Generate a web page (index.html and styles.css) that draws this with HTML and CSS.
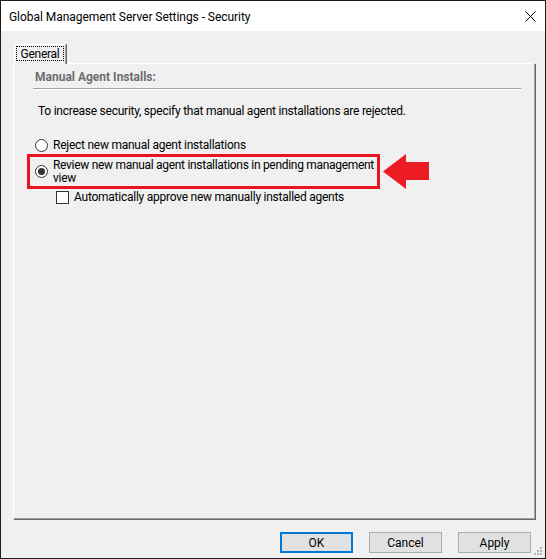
FILE: index.html
```html
<!DOCTYPE html>
<html>
<head>
    <title>Global Management Server Settings - Security</title>
    <link rel="stylesheet" href="styles.css">
</head>
<body>
    <div class="window">
        <div class="titlebar">
            <span class="title">Global Management Server Settings - Security</span>
            <svg class="close" width="11" height="11" viewBox="0 0 11 11">
                <path d="M0.5 0.5 L10.5 10.5 M10.5 0.5 L0.5 10.5" stroke="#000" stroke-width="1" fill="none"/>
            </svg>
        </div>

        <div class="client">
            <div class="tabs">
                <div class="tab"><span class="tab-label">General</span></div>
            </div>

            <div class="panel">
                <div class="group-title">Manual Agent Installs:</div>
                <div class="separator"></div>
                <p class="intro">To increase security, specify that manual agent installations are rejected.</p>

                <div class="options">
                    <div class="option">
                        <span class="radio"></span>
                        <span class="option-text">Reject new manual agent installations</span>
                    </div>

                    <!-- highlighted choice with the callout arrow -->
                    <div class="callout">
                        <div class="option highlight">
                            <span class="radio checked"></span>
                            <span class="option-text">Review new manual agent installations in pending management view</span>
                        </div>
                        <svg class="arrow" width="46" height="35" viewBox="0 0 46 35">
                            <polygon points="0,17.5 23,0 23,8 46,8 46,26 23,26 23,35" fill="#ed1c24"/>
                        </svg>
                    </div>

                    <div class="option sub">
                        <span class="checkbox"></span>
                        <span class="option-text">Automatically approve new manually installed agents</span>
                    </div>
                </div>
            </div>

            <div class="buttons">
                <button class="btn default">OK</button>
                <button class="btn">Cancel</button>
                <button class="btn">Apply</button>
            </div>

            <svg class="grip" width="9" height="9" viewBox="0 0 9 9">
                <rect x="6" y="0" width="2" height="2" fill="#b4b4b4"/>
                <rect x="3" y="3" width="2" height="2" fill="#b4b4b4"/>
                <rect x="6" y="3" width="2" height="2" fill="#b4b4b4"/>
                <rect x="0" y="6" width="2" height="2" fill="#b4b4b4"/>
                <rect x="3" y="6" width="2" height="2" fill="#b4b4b4"/>
                <rect x="6" y="6" width="2" height="2" fill="#b4b4b4"/>
            </svg>
        </div>
    </div>
</body>
</html>
```

FILE: styles.css
```css
body {
    margin: 0;
    padding: 0;
    font-family: 'Roboto', 'Liberation Sans', sans-serif;
    font-size: 12px;
    color: #000;
}

.window {
    box-sizing: border-box;
    width: 546px;
    height: 559px;
    border: 1px solid #1c1c1c;
    display: flex;
    flex-direction: column;
    background: #f0f0f0;
}

.titlebar {
    height: 30px;
    background: #fff;
    display: flex;
    align-items: center;
    justify-content: space-between;
    padding: 0 9px 0 8px;
}

.title {
    font-size: 12px;
    margin-top: 1px;
    letter-spacing: -0.05px;
}

.close {
    margin-top: 1px;
}

.client {
    position: relative;
    flex: 1;
    display: flex;
    flex-direction: column;
    padding: 13px 10px 0 12px;
    letter-spacing: -0.25px;
}

.tabs {
    display: flex;
    height: 19px;
}

.tab {
    margin-left: 1px;
    width: 52px;
    height: 20px;
    box-sizing: border-box;
    border-top: 1px solid #fff;
    border-left: 1px solid #fff;
    border-right: 1px solid #a0a0a0;
    box-shadow: 1px 0 0 #696969;
    background: #f0f0f0;
    position: relative;
    z-index: 1;
    padding: 1px 0 0 1px;
}

.tab-label {
    display: block;
    border: 1px dotted #000;
    height: 15px;
    line-height: 14px;
    text-align: center;
    width: 48px;
    box-sizing: border-box;
}

.panel {
    height: 456px;
    box-sizing: border-box;
    border-top: 1px solid #fff;
    border-left: 1px solid #fff;
    border-right: 1px solid #a0a0a0;
    border-bottom: 1px solid #a0a0a0;
    box-shadow: 1px 1px 0 #696969;
    padding: 6px 0 0 19px;
}

.group-title {
    font-weight: bold;
    color: #6d6d6d;
    margin-left: 2px;
    line-height: 15px;
    letter-spacing: 0;
}

.separator {
    margin-top: 3px;
    width: 488px;
    height: 1px;
    background: #a0a0a0;
    border-bottom: 1px solid #fff;
}

.intro {
    margin: 14px 0 0 5px;
    line-height: 15px;
}

.options {
    margin: 17px 0 0 -6px;
}

.option {
    display: flex;
    align-items: flex-start;
    gap: 5px;
    padding: 0 0 0 5px;
    border: 3px solid transparent;
    width: 353px;
    box-sizing: border-box;
    line-height: 14px;
}

.option .option-text {
    margin-top: -1px;
}

.callout {
    position: relative;
}

.highlight {
    border-color: #e8141e;
    height: 35px;
    padding-top: 2px;
    margin-top: -1px;
}

.highlight .radio {
    margin-top: 6px;
}

.highlight .option-text {
    margin-top: 0;
    line-height: 13px;
    letter-spacing: -0.3px;
}

.arrow {
    position: absolute;
    left: 356px;
    top: 0;
}

.sub {
    padding-left: 26px;
    margin-top: -1px;
    width: 400px;
}

.radio {
    flex: none;
    box-sizing: border-box;
    width: 13px;
    height: 13px;
    border: 1px solid #333;
    border-radius: 50%;
    background: #fff;
    display: flex;
    align-items: center;
    justify-content: center;
}

.radio.checked::after {
    content: '';
    width: 7px;
    height: 7px;
    border-radius: 50%;
    background: #333;
}

.checkbox {
    flex: none;
    box-sizing: border-box;
    width: 13px;
    height: 13px;
    border: 1px solid #333;
    background: #fff;
}

.buttons {
    display: flex;
    justify-content: flex-end;
    gap: 16px;
    margin-top: 13px;
    padding-right: 4px;
}

.btn {
    width: 73px;
    height: 21px;
    box-sizing: border-box;
    background: #e1e1e1;
    border: 1px solid #adadad;
    font-family: 'Roboto', 'Liberation Sans', sans-serif;
    font-size: 12px;
    color: #000;
    padding: 0;
}

.btn.default {
    border: 2px solid #0078d7;
}

.grip {
    position: absolute;
    right: 2px;
    bottom: 2px;
}
```
